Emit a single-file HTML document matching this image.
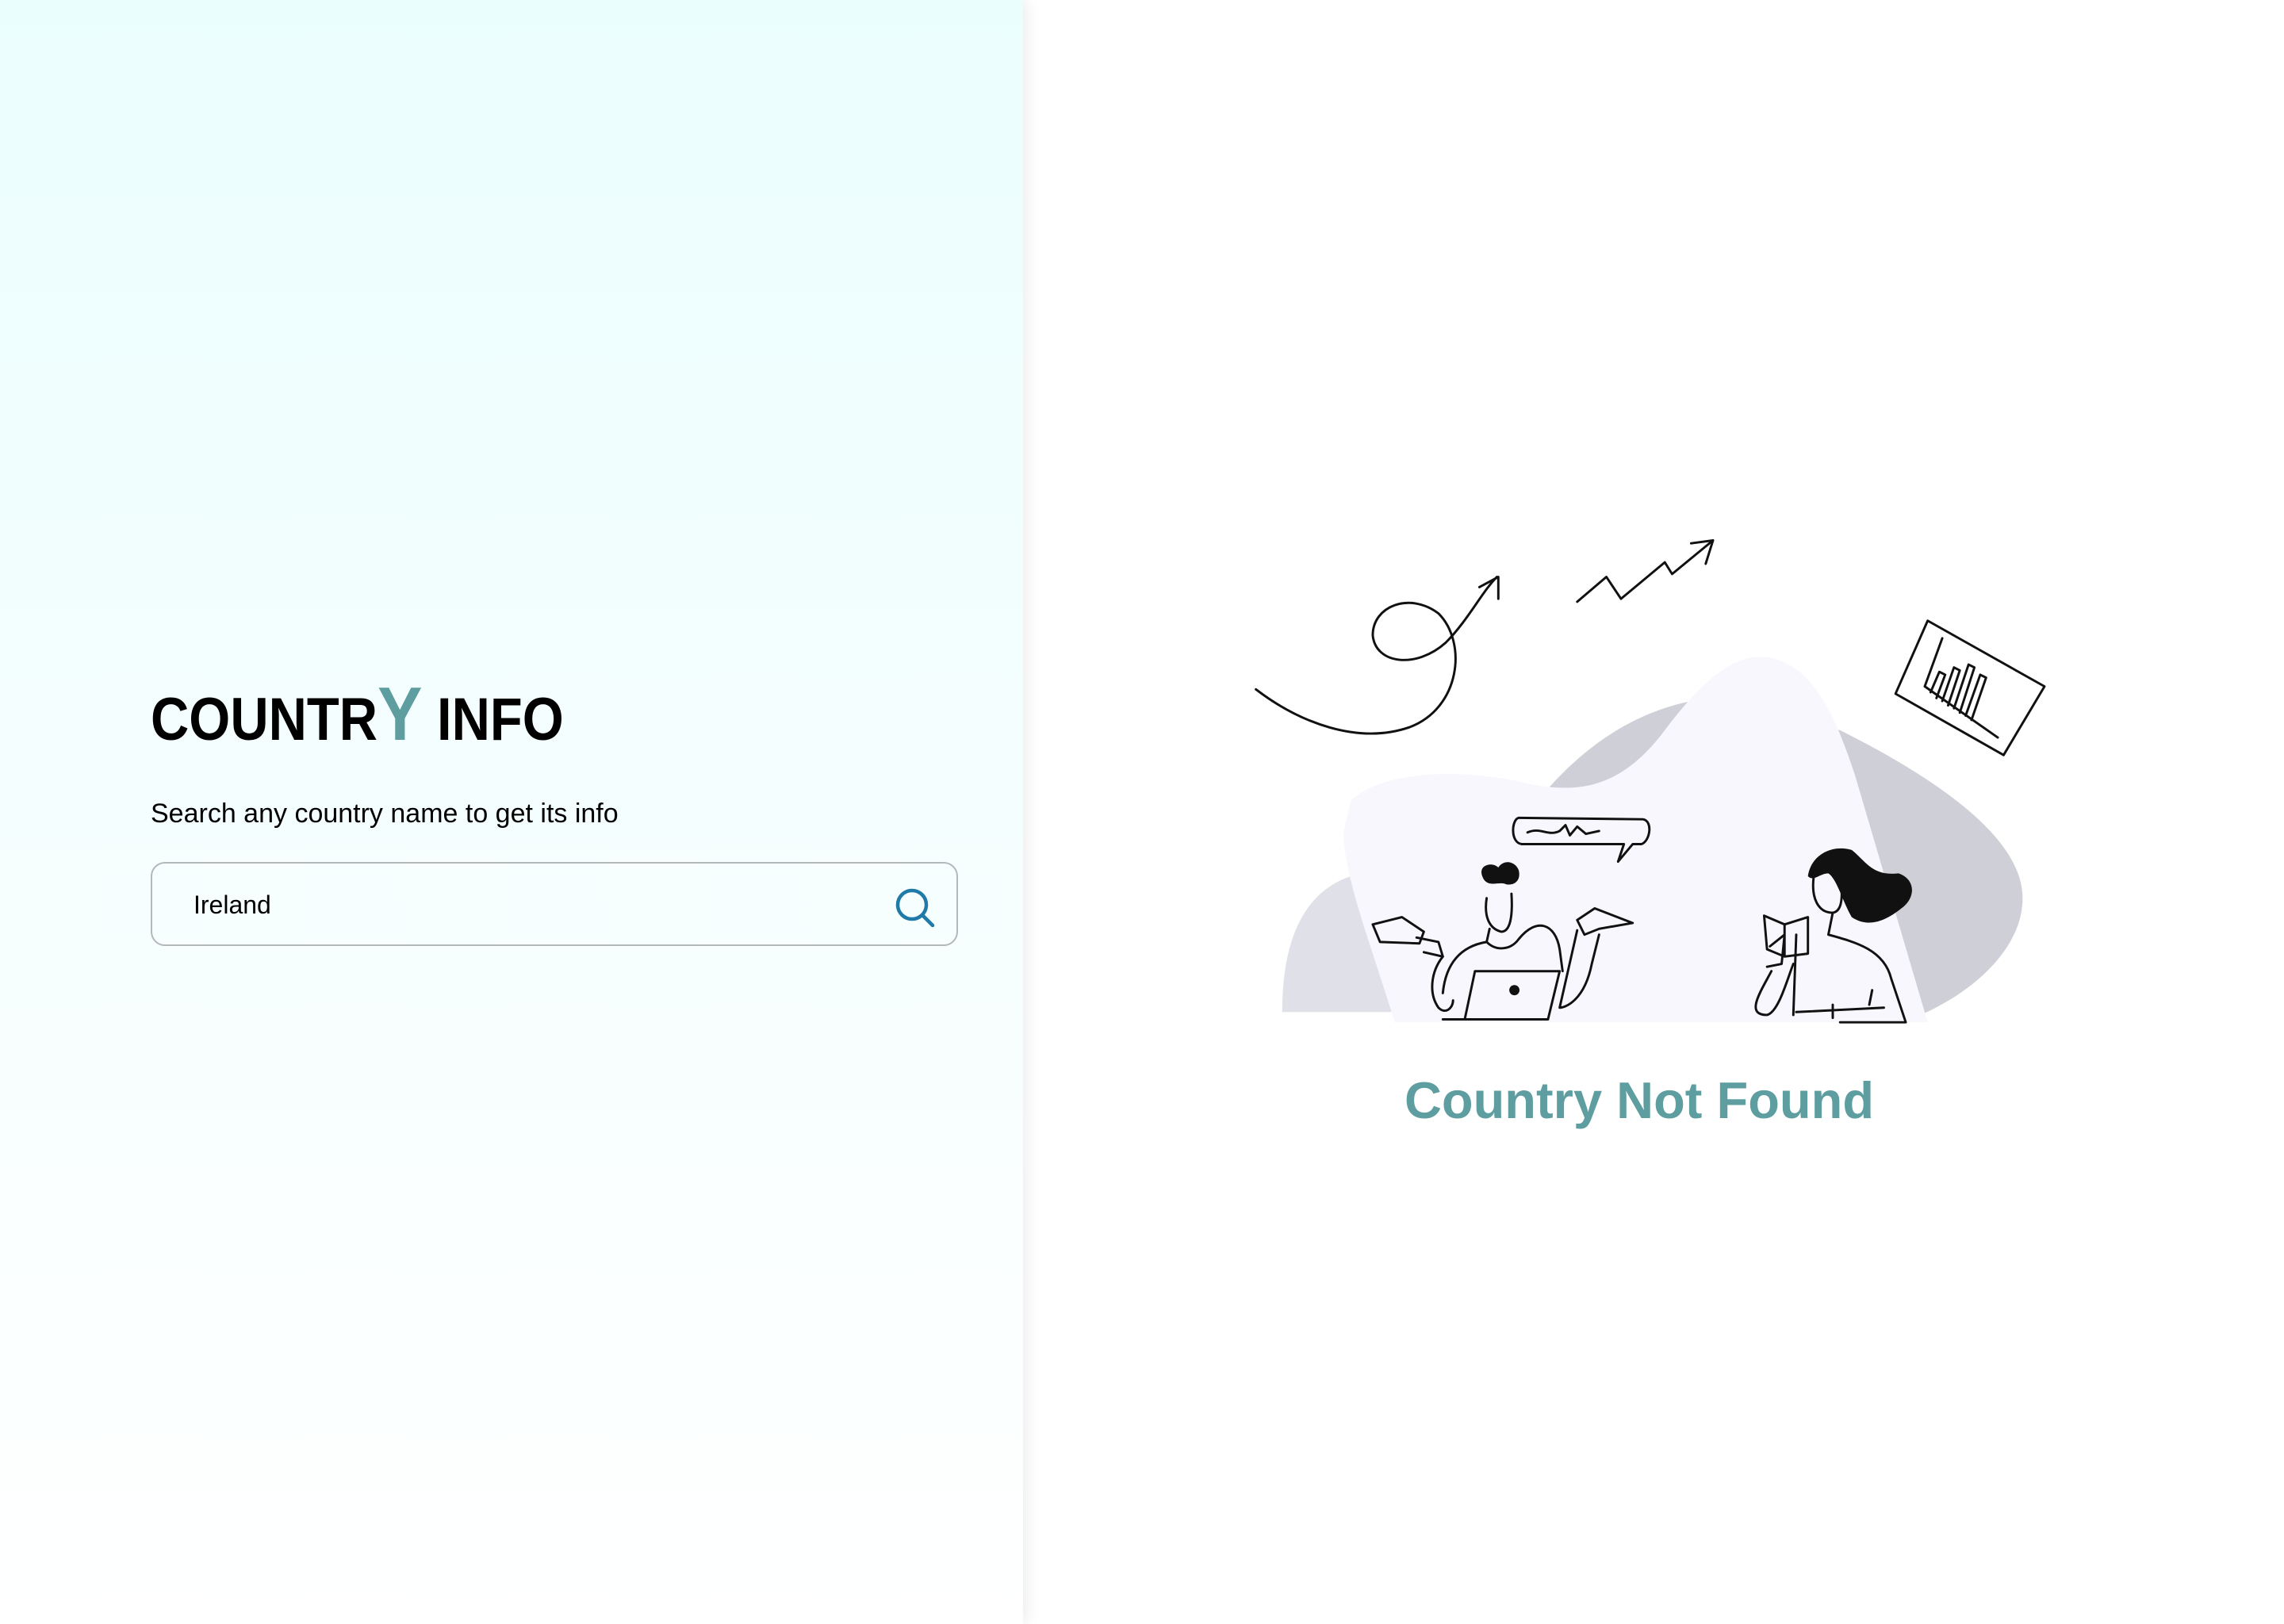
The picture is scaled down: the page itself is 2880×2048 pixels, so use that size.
<!DOCTYPE html>
<html><head><meta charset="utf-8"><style>
html,body{margin:0;padding:0;width:2880px;height:2048px;overflow:hidden;background:#fff;font-family:"Liberation Sans",sans-serif;}
.left{position:absolute;left:0;top:0;width:1290px;height:2048px;background:linear-gradient(#ebfefe,#ffffff);box-shadow:4px 0 18px rgba(0,0,0,0.08);z-index:2}
.title{position:absolute;left:190px;top:853px;font-size:76px;font-weight:bold;color:#000;white-space:nowrap;line-height:1;transform:scaleX(0.88);transform-origin:0 0;}
.title .y{color:#5f9ea0;font-size:96px;}
.sub{position:absolute;left:190px;top:1007px;font-size:34px;color:#000;white-space:nowrap;}
.inp{position:absolute;left:190px;top:1087px;width:1018px;height:106px;border:2px solid #b3b8bb;border-radius:18px;box-sizing:border-box;}
.inp span{position:absolute;left:52px;top:34px;font-size:32px;color:#000;}
.inp svg{position:absolute;left:934px;top:28px;}
.nf{position:absolute;left:1570px;width:994px;top:1350px;text-align:center;font-size:65px;font-weight:bold;color:#5f9ea0;white-space:nowrap;}
.ill{position:absolute;left:0;top:0;}
</style></head><body>
<svg class="ill" width="2880" height="2048" viewBox="0 0 1564 1112">
<path d="M878 693 C878 640 895 610 925 600 L955 693 Z" fill="#e0e0e8"/>
<path d="M1060 540 C1100 495 1140 482 1170 478 L1260 500 C1330 535 1385 575 1385 615 C1385 650 1350 680 1315 695 L1200 695 Z" fill="#cfcfd7"/>
<path d="M925 548 C945 530 990 525 1040 535 C1080 545 1110 540 1140 500 C1170 460 1190 448 1210 450 C1240 455 1255 485 1270 530 L1320 700 L955 700 C940 650 920 600 920 570 Z" fill="#f8f7fd"/>
<g fill="none" stroke="#111" stroke-width="1.6" stroke-linecap="round" stroke-linejoin="round">
<path d="M860 472 C890 495 930 510 965 498 C1000 485 1005 440 985 420 C965 405 940 415 940 435 C942 455 970 458 990 440 C1005 425 1015 405 1025 395"/>
<path d="M1013 402 L1026 395 L1026 410"/>
<path d="M1080 412 L1100 395 L1110 410 L1140 385 L1145 393 L1173 370"/>
<path d="M1158 372 L1173 370 L1168 386"/>
<path d="M1320 425 L1400 470 L1372 517 L1298 475 Z"/>
<path d="M1330 437 L1318 470 L1368 505"/>
<path d="M1322 474 L1328 460 L1332 462 L1326 478 M1330 480 L1338 457 L1342 459 L1334 483 M1338 485 L1348 455 L1352 457 L1342 488 M1346 490 L1356 462 L1360 464 L1350 493"/>
<path d="M1040 560 L1125 561 C1132 562 1130 576 1124 578 L1118 578 L1108 590 L1112 578 L1042 578 C1034 577 1035 561 1040 560 Z"/>
<path d="M1046 570 C1055 566 1060 573 1068 569 L1072 565 L1075 572 L1080 566 L1086 571 L1095 569"/>
<path d="M1018 615 C1016 628 1020 636 1028 638 C1034 638 1036 628 1035 612"/>
<path d="M1020 636 L1018 645 C1025 652 1035 650 1040 643 C1052 628 1065 632 1068 650 L1070 665"/>
<path d="M1018 645 C1000 648 990 660 988 680 M988 655 C980 665 978 680 985 690 C990 695 995 690 995 685"/>
<path d="M940 633 L960 628 L975 638 L972 646 L945 645 Z M970 642 L985 645 L988 655 L975 652"/>
<path d="M1080 630 L1092 622 L1118 632 L1095 636 L1085 640 Z M1080 637 L1068 690 C1072 690 1085 685 1090 660 L1095 640"/>
<path d="M1010 665 L1068 665 L1060 698 L1003 698 Z M988 698 L1060 698"/>
<path d="M1242 600 C1240 615 1245 625 1255 625 C1262 624 1262 612 1260 600"/>
<path d="M1255 625 L1252 640 C1270 645 1290 650 1295 670 L1305 700 L1260 700 M1230 640 L1228 695 M1213 665 C1205 680 1195 695 1210 695 C1218 693 1224 670 1228 660"/>
<path d="M1208 627 L1222 633 L1238 628 L1238 653 L1222 655 L1210 650 Z M1222 633 L1222 655 M1212 648 L1222 640 L1220 660 L1210 662"/>
<path d="M1230 693 L1290 690 M1255 688 L1255 697 M1282 678 L1280 688"/>
</g>
<circle cx="1037" cy="678" r="3.5" fill="#111"/>
<path d="M1015 600 C1012 592 1022 590 1026 594 C1030 588 1038 590 1040 596 C1042 605 1034 607 1030 605 C1025 604 1018 608 1015 600 Z" fill="#111"/>
<path d="M1238 600 C1240 585 1255 578 1268 582 C1278 590 1282 600 1300 598 C1312 602 1312 615 1302 622 C1292 630 1280 636 1268 628 C1262 618 1258 602 1252 598 C1246 598 1242 604 1238 600 Z" fill="#111"/>
</svg>
<div class="left">
<div class="title">COUNTR<span class="y">Y</span> INFO</div>
<div class="sub">Search any country name to get its info</div>
<div class="inp"><span>Ireland</span>
<svg width="56" height="56" viewBox="0 0 56 56" fill="none" stroke="#1f7aa8" stroke-width="4.5" stroke-linecap="round"><circle cx="24" cy="24" r="18"/><path d="M37 37 L50 50"/></svg>
</div>
</div>
<div class="nf">Country Not Found</div>
</body></html>
